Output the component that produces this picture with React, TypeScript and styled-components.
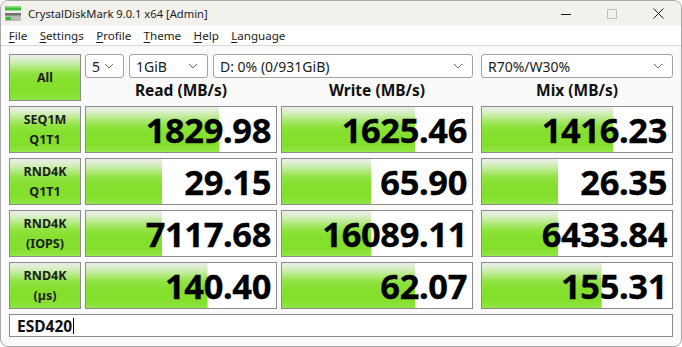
import React from 'react';
import styled, { createGlobalStyle } from 'styled-components';

const Global = createGlobalStyle`
  html, body { margin: 0; padding: 0; background: #ffffff; }
  body { font-family: "Noto Sans", "DejaVu Sans", sans-serif; }
  * { box-sizing: border-box; }
`;

const GREEN = `linear-gradient(to bottom, #eaece8 0%, #dcefcd 10%, #b4ea84 26%, #8fe33f 42%, #84e02c 60%, #84e02c 85%, #93e64a 100%)`;

const Window = styled.div`
  width: 682px;
  height: 347px;
  border: 1px solid #a8a8a8;
  border-radius: 8px;
  overflow: hidden;
  display: flex;
  flex-direction: column;
  background: #fafafa;
`;

const TitleBar = styled.div`
  height: 25px;
  background: #f3f1eb;
  display: flex;
  align-items: center;
`;

const Logo = styled.svg`
  margin-left: 3px;
  margin-right: 6px;
  flex: none;
`;

const Title = styled.div`
  font-size: 11.2px;
  color: #1b1b1b;
  flex: 1;
  white-space: nowrap;
`;

const Controls = styled.div`
  display: flex;
  height: 100%;
`;

const CtrlButton = styled.div`
  width: 46px;
  height: 100%;
  display: flex;
  align-items: center;
  justify-content: center;
`;

const MenuBar = styled.div`
  height: 20px;
  background: #ffffff;
  border-bottom: 1px solid #d8d8d8;
  display: flex;
  align-items: center;
  padding-left: 1.5px;
`;

const MenuItem = styled.div`
  font-size: 11.6px;
  color: #1b1b1b;
  padding: 0 6.2px;
  white-space: nowrap;
`;

const Key = styled.span`
  text-decoration: underline;
  text-underline-offset: 2px;
`;

const Main = styled.div`
  flex: 1;
  padding: 8px 8px 0 8px;
  display: flex;
  flex-direction: column;
  gap: 5px;
`;

const TopRow = styled.div`
  display: flex;
  gap: 4px;
  height: 47px;
`;

const Row = styled.div`
  display: flex;
  gap: 4px;
  height: 47px;
`;

const GreenButton = styled.div`
  width: 72px;
  height: 47px;
  flex: none;
  border: 1px solid #8c8c8c;
  background: ${GREEN};
  display: flex;
  flex-direction: column;
  align-items: center;
  justify-content: center;
  font-size: 12.5px;
  font-weight: 700;
  line-height: 20px;
  color: #1c1c1c;
`;

const TopRight = styled.div`
  display: flex;
  flex-direction: column;
  flex: 1;
`;

const ComboRow = styled.div`
  display: flex;
  height: 24px;
`;

const Combo = styled.div<{ $w: number; $gap: number }>`
  width: ${(p) => p.$w}px;
  margin-left: ${(p) => p.$gap}px;
  height: 24px;
  background: #ffffff;
  border: 1px solid #a3a3a3;
  border-radius: 3px;
  display: flex;
  align-items: center;
  padding: 0 9px 0 6px;
  font-size: 14px;
  color: #1b1b1b;
`;

const ComboText = styled.span`
  flex: 1;
  white-space: nowrap;
`;

const HeaderRow = styled.div`
  display: flex;
  gap: 4px;
  height: 23px;
  align-items: center;
`;

const Header = styled.div<{ $mix?: boolean }>`
  width: 192px;
  margin-left: ${(p) => (p.$mix ? 4 : 0)}px;
  text-align: center;
  font-size: 15.5px;
  font-weight: 700;
  color: #111;
`;

const Cell = styled.div<{ $mix?: boolean }>`
  width: 192px;
  height: 47px;
  margin-left: ${(p) => (p.$mix ? 4 : 0)}px;
  border: 1px solid #8c8c8c;
  background-color: #ffffff;
  background-image: ${GREEN};
  background-repeat: no-repeat;
  display: flex;
  align-items: center;
  justify-content: flex-end;
  padding-right: 5px;
  font-size: 34.5px;
  font-weight: 700;
  color: #000;
  letter-spacing: -0.4px;
  -webkit-text-stroke: 0.3px #000;
`;

const Comment = styled.div`
  height: 23px;
  border: 1px solid #8c8c8c;
  background: #ffffff;
  display: flex;
  align-items: center;
  padding-left: 7px;
  font-size: 15.5px;
  font-weight: 700;
  color: #111;
`;

const Caret = styled.span`
  width: 1px;
  height: 16px;
  background: #000;
  margin-left: 1px;
`;

const Chevron = () => (
  <svg width="10" height="6" viewBox="0 0 10 6">
    <path d="M1 1 L5 5 L9 1" fill="none" stroke="#6b6b6b" strokeWidth="1" />
  </svg>
);

type RowData = { l1: string; l2: string; vals: [string, number][] };

const rows: RowData[] = [
  { l1: 'SEQ1M', l2: 'Q1T1', vals: [['1829.98', 0.7], ['1625.46', 0.7], ['1416.23', 0.69]] },
  { l1: 'RND4K', l2: 'Q1T1', vals: [['29.15', 0.4], ['65.90', 0.47], ['26.35', 0.4]] },
  { l1: 'RND4K', l2: '(IOPS)', vals: [['7117.68', 0.4], ['16089.11', 0.47], ['6433.84', 0.4]] },
  { l1: 'RND4K', l2: '(\u00b5s)', vals: [['140.40', 0.64], ['62.07', 0.7], ['155.31', 0.63]] },
];

export default function App() {
  return (
    <>
      <Global />
      <Window>
        <TitleBar>
          <Logo width="18" height="18" viewBox="0 0 18 18">
            <rect x="1" y="1.5" width="16" height="4" fill="#3fbf3a" />
            <rect x="1" y="1.5" width="16" height="1.2" fill="#7fe07a" />
            <rect x="1" y="8" width="16" height="8" fill="#b9b9b9" />
            <rect x="1" y="8" width="16" height="2.5" fill="#6f6f6f" />
            <rect x="2" y="12" width="5" height="3" fill="#36b836" />
          </Logo>
          <Title>CrystalDiskMark 9.0.1 x64 [Admin]</Title>
          <Controls>
            <CtrlButton>
              <svg width="10" height="10" viewBox="0 0 10 10">
                <path d="M0 5.5 H10" stroke="#1b1b1b" strokeWidth="1" />
              </svg>
            </CtrlButton>
            <CtrlButton>
              <svg width="10" height="10" viewBox="0 0 10 10">
                <rect x="0.5" y="0.5" width="9" height="9" fill="none" stroke="#c2c2c2" strokeWidth="1" />
              </svg>
            </CtrlButton>
            <CtrlButton>
              <svg width="11" height="11" viewBox="0 0 11 11">
                <path d="M0.5 0.5 L10.5 10.5 M10.5 0.5 L0.5 10.5" stroke="#1b1b1b" strokeWidth="1" />
              </svg>
            </CtrlButton>
          </Controls>
        </TitleBar>
        <MenuBar>
          <MenuItem><Key>F</Key>ile</MenuItem>
          <MenuItem><Key>S</Key>ettings</MenuItem>
          <MenuItem><Key>P</Key>rofile</MenuItem>
          <MenuItem><Key>T</Key>heme</MenuItem>
          <MenuItem><Key>H</Key>elp</MenuItem>
          <MenuItem><Key>L</Key>anguage</MenuItem>
        </MenuBar>
        <Main>
          <TopRow>
            <GreenButton>All</GreenButton>
            <TopRight>
              <ComboRow>
                <Combo $w={39} $gap={0}><ComboText>5</ComboText><Chevron /></Combo>
                <Combo $w={79} $gap={5}><ComboText>1GiB</ComboText><Chevron /></Combo>
                <Combo $w={260} $gap={5}><ComboText>D: 0% (0/931GiB)</ComboText><Chevron /></Combo>
                <Combo $w={192} $gap={8}><ComboText>R70%/W30%</ComboText><Chevron /></Combo>
              </ComboRow>
              <HeaderRow>
                <Header>Read (MB/s)</Header>
                <Header>Write (MB/s)</Header>
                <Header $mix>Mix (MB/s)</Header>
              </HeaderRow>
            </TopRight>
          </TopRow>
          {rows.map((r, i) => (
            <Row key={i}>
              <GreenButton>
                <span>{r.l1}</span>
                <span>{r.l2}</span>
              </GreenButton>
              {r.vals.map(([v, f], j) => (
                <Cell key={j} $mix={j === 2} style={{ backgroundSize: `${f * 100}% 100%` }}>
                  {v}
                </Cell>
              ))}
            </Row>
          ))}
          <Comment>
            ESD420
            <Caret />
          </Comment>
        </Main>
      </Window>
    </>
  );
}
